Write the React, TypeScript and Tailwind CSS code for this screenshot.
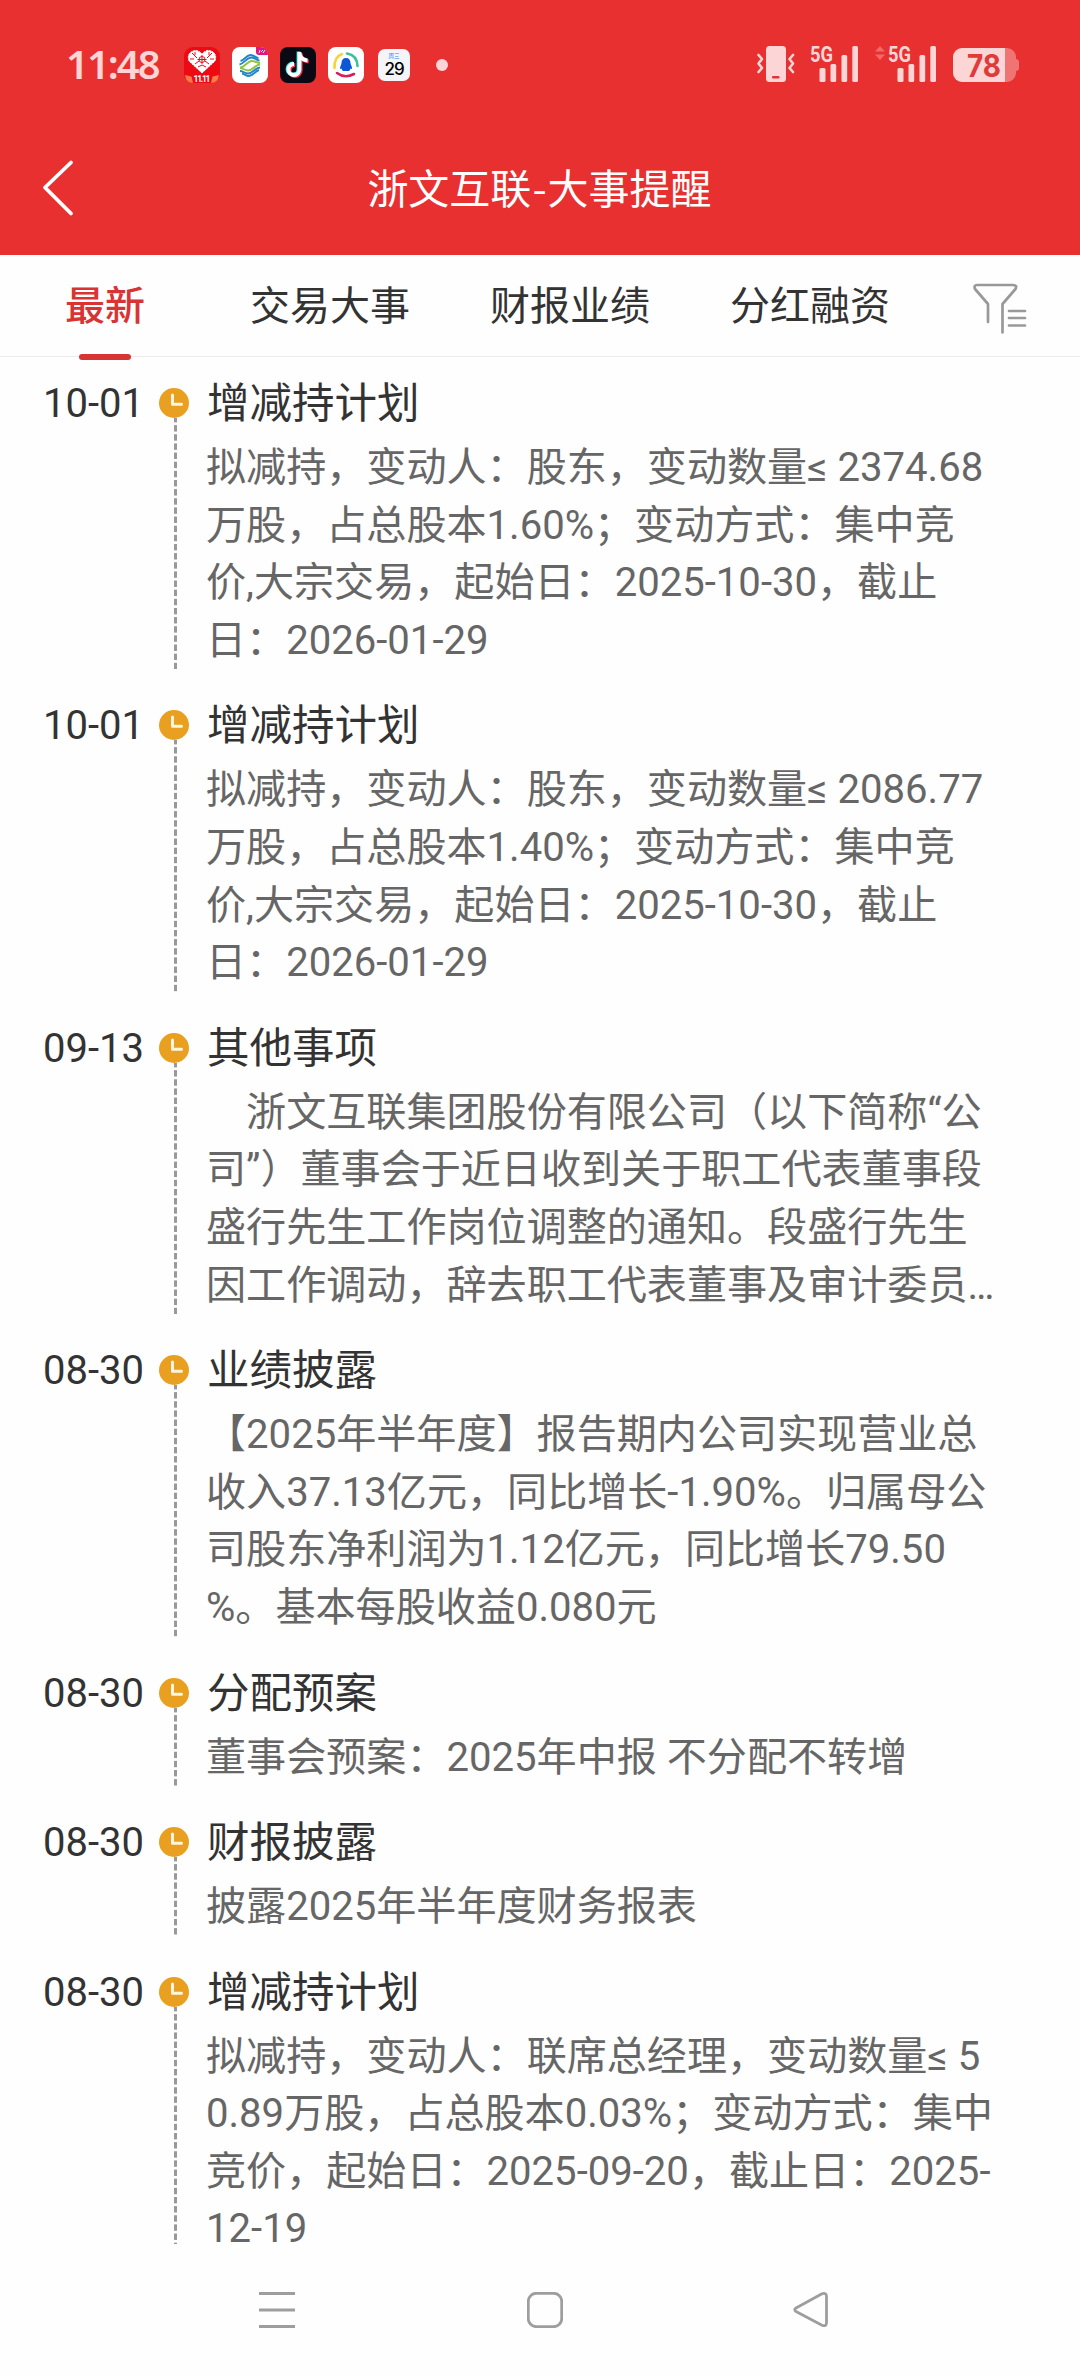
type EventItem = {
  id: number
  date: string
  title: string
  lines: string[]
}

const tabs = ['最新', '交易大事', '财报业绩', '分红融资']

const events: EventItem[] = [
  {
    id: 1,
    date: '10-01',
    title: '增减持计划',
    lines: [
      '拟减持，变动人：股东，变动数量≤ 2374.68',
      '万股，占总股本1.60%；变动方式：集中竞',
      '价,大宗交易，起始日：2025-10-30，截止',
      '日：2026-01-29',
    ],
  },
  {
    id: 2,
    date: '10-01',
    title: '增减持计划',
    lines: [
      '拟减持，变动人：股东，变动数量≤ 2086.77',
      '万股，占总股本1.40%；变动方式：集中竞',
      '价,大宗交易，起始日：2025-10-30，截止',
      '日：2026-01-29',
    ],
  },
  {
    id: 3,
    date: '09-13',
    title: '其他事项',
    lines: [
      '\u3000浙文互联集团股份有限公司（以下简称“公',
      '司”）董事会于近日收到关于职工代表董事段',
      '盛行先生工作岗位调整的通知。段盛行先生',
      '因工作调动，辞去职工代表董事及审计委员…',
    ],
  },
  {
    id: 4,
    date: '08-30',
    title: '业绩披露',
    lines: [
      '【2025年半年度】报告期内公司实现营业总',
      '收入37.13亿元，同比增长-1.90%。归属母公',
      '司股东净利润为1.12亿元，同比增长79.50',
      '%。基本每股收益0.080元',
    ],
  },
  {
    id: 5,
    date: '08-30',
    title: '分配预案',
    lines: ['董事会预案：2025年中报 不分配不转增'],
  },
  {
    id: 6,
    date: '08-30',
    title: '财报披露',
    lines: ['披露2025年半年度财务报表'],
  },
  {
    id: 7,
    date: '08-30',
    title: '增减持计划',
    lines: [
      '拟减持，变动人：联席总经理，变动数量≤ 5',
      '0.89万股，占总股本0.03%；变动方式：集中',
      '竞价，起始日：2025-09-20，截止日：2025-',
      '12-19',
    ],
  },
]

const ShoppingIcon = () => (
  <svg width="36" height="36" viewBox="0 0 36 36">
    <rect width="36" height="36" rx="9" fill="#ee0a14" />
    <path d="M1 28 Q18 33 35 28 Q34 36 27 36 H9 Q2 36 1 28Z" fill="#ff7a45" />
    <path d="M7 27 L18 25 L29 27 L27 36 H9Z" fill="#ee0a14" />
    <path
      d="M18 26 L5 14 Q3 8 7 5 Q13 1 18 7 Q23 1 29 5 Q33 8 31 14Z"
      fill="#fff"
      stroke="#fff"
      strokeDasharray="2 1"
    />
    <g fill="none" stroke="#ee0a14" strokeWidth="1">
      <circle cx="18" cy="12.500" r="3" />
      <path d="M18 8v9M13.500 12.500h9M8 6l5 5M28 6l-5 5M6 12h4M30 12h-4M11 17l4-3M25 17l-4-3M14 20l4-2 4 2M11 5v3M25 5v3" />
    </g>
    <text x="18" y="34.500" textAnchor="middle" fontSize="8.500" fontWeight="700" fill="#fff" fontFamily="Roboto, sans-serif" textLength="17">
      11.11
    </text>
  </svg>
)

const MobileIcon = () => (
  <svg width="36" height="36" viewBox="0 0 36 36">
    <rect width="36" height="36" rx="8" fill="#fff" />
    <path d="M24 0h4q8 0 8 8h-9q-3 0-3-3z" fill="#e0157f" />
    <path d="M27 6l1-3M29 5l2-2M31 6l2-3" stroke="#fff" strokeWidth=".9" />
    <g fill="none" strokeWidth="1.900">
      <path d="M8.500 14c4-1 6-6 10-6 4 0 5 3 8 3" stroke="#2386c8" />
      <path d="M7.500 17.500c5-1 7-7 12-7 4 0 5 3 8 3" stroke="#2386c8" />
      <path d="M8 20.500c5 0 7-6.500 12-6.500 3 0 5 2 8 2" stroke="#8dc63f" />
      <path d="M8 21c3 0 5 2.500 8 2.500 5 0 7-6 12-6" stroke="#8dc63f" />
      <path d="M8 24c3 0 5 2.500 8 2.500 5 0 7-6 12-6" stroke="#2386c8" />
      <path d="M10 26.500c2 0 4 2.500 7 2.500 4 0 6-5 10-6" stroke="#2386c8" />
    </g>
  </svg>
)

const MusicNoteIcon = () => {
  const note = 'M19.500 5v17.500a5.500 5.500 0 1 1-5.500-5.500M19.500 6c.5 4.500 3.500 7 8 7.500'
  return (
    <svg width="36" height="36" viewBox="0 0 36 36">
      <rect width="36" height="36" rx="8" fill="#0a0914" />
      <g fill="none" strokeWidth="3.800">
        <path d={note} stroke="#25f4ee" transform="translate(-1 -.5)" />
        <path d={note} stroke="#fe2c55" transform="translate(1.200 1)" />
        <path d={note} stroke="#fff" />
      </g>
    </svg>
  )
}

const PenguinIcon = () => (
  <svg width="36" height="36" viewBox="0 0 36 36">
    <rect width="36" height="36" rx="8" fill="#fff" />
    <g fill="none" strokeWidth="2.600" strokeLinecap="round">
      <path d="M6.500 21Q6 10 14 7" stroke="#f6d23c" />
      <path d="M19 6.500Q29 8 29.500 19" stroke="#3fbf9d" />
      <path d="M9 26Q17 32 26 27" stroke="#d81e5b" />
    </g>
    <path
      d="M18 11c-3 0-4.500 2-4.500 5 0 2-1.500 3-1.500 5 0 1 .6 1.300 1.500.5.400 1.500 1 2 1.500 2.500h6c.500-.500 1.100-1 1.500-2.500.900.800 1.500.500 1.500-.5 0-2-1.500-3-1.500-5 0-3-1.500-5-4.500-5z"
      fill="#0b57d8"
    />
  </svg>
)

const VibrateIcon = () => (
  <svg width="38" height="36" viewBox="0 0 38 36" fill="none">
    <rect x="9" width="20" height="36" rx="3.500" fill="#fcd6d6" />
    <rect x="15" y="30" width="7.500" height="2.500" rx="1.200" fill="#e83030" />
    <path
      d="M1.500 9l3.500 4-3.500 4.500 3.500 4.500-3.500 4M36 9l-3.500 4 3.500 4.500-3.500 4.500 3.500 4"
      stroke="#fcd6d6"
      strokeWidth="2.600"
      strokeLinecap="round"
      strokeLinejoin="round"
    />
  </svg>
)

const SignalIcon = ({ activity = false }: { activity?: boolean }) => (
  <svg className="overflow-visible" width="62" height="38" viewBox="0 0 62 38">
    {activity && <path d="M0 7.500L5 2l5 5.500zM0 10.500h10L5 16z" fill="#f06a6a" />}
    <text x="13" y="17.500" fontSize="21.500" fontWeight="700" textLength="23" lengthAdjust="spacingAndGlyphs" fill="#fcd6d6" fontFamily="Roboto, sans-serif">
      5G
    </text>
    <g fill="#fcd6d6">
      <rect x="22.500" y="24" width="6" height="14" rx="1.500" />
      <rect x="33.500" y="20" width="5.700" height="18" rx="1.500" />
      <rect x="44.500" y="11" width="5.700" height="27" rx="1.500" />
      <rect x="55.300" y="2" width="5.700" height="36" rx="1.500" />
    </g>
  </svg>
)

const BatteryIcon = () => (
  <svg className="overflow-visible" width="66" height="34" viewBox="0 0 66 34">
    <path d="M52 0h2a9 9 0 0 1 9 9v2q3 .5 3 3v6q0 2.500-3 3v2a9 9 0 0 1-9 9h-2z" fill="#f17474" />
    <path d="M9 0h43v34H9a9 9 0 0 1-9-9V9a9 9 0 0 1 9-9z" fill="#fcd6d6" />
    <text x="31" y="28.500" textAnchor="middle" fontSize="31" fontWeight="700" fill="#e03a3a" fontFamily="Inter, sans-serif" textLength="34" lengthAdjust="spacingAndGlyphs">
      78
    </text>
  </svg>
)

const FilterIcon = () => (
  <svg width="54" height="52" viewBox="0 0 54 52" fill="none" stroke="#999" strokeWidth="2.700" strokeLinecap="round" strokeLinejoin="round">
    <path d="M15 39V21L2 6Q.5 2 4 2H40Q44.500 2 42.500 6L29.500 21V49.500" />
    <path d="M36 28h16M36 35h16M36 42.500h16" />
  </svg>
)

const ClockIcon = () => (
  <svg className="block shrink-0" width="30" height="30" viewBox="0 0 30 30" fill="none">
    <circle cx="15" cy="15" r="15" fill="#e9a020" />
    <path d="M13.500 7V16.200H22.500" stroke="#fff6e0" strokeWidth="3" strokeLinecap="round" strokeLinejoin="round" />
  </svg>
)

const StatusBar = () => (
  <div className="flex h-[130px] items-center justify-between pl-[66px] pr-[61px]">
    <div className="flex items-center">
      <span className="w-[118px] pb-[3px] font-['Noto_Sans'] text-[40px] leading-[56px] font-semibold tracking-[-2px] text-[#fcd6d6]">11:48</span>
      <div className="flex items-center gap-3">
        <ShoppingIcon />
        <MobileIcon />
        <MusicNoteIcon />
        <PenguinIcon />
      </div>
      <div className="ml-3.5 flex h-8 w-8 flex-col items-center rounded-[7px] bg-[#f3f5f8] pt-[3px]">
        <span className="text-[5.500px] leading-[8px] text-[#2f80e8]">周三</span>
        <span className="font-[Inter] text-[17px] leading-[18px] font-medium tracking-[-1px] text-black">29</span>
      </div>
      <span className="ml-[26px] h-3 w-3 rounded-full bg-[#fcd6d6]" />
    </div>
    <div className="flex items-end pb-1">
      <VibrateIcon />
      <div className="ml-[2px]"><SignalIcon /></div>
      <div className="ml-4"><SignalIcon activity /></div>
      <div className="ml-4"><BatteryIcon /></div>
    </div>
  </div>
)

// the last row runs under the navigation bar, so its dashed line stops early
const EventRow = ({ event }: { event: EventItem }) => (
  <li className="flex pb-[25px] last:h-[283px] last:pb-0">
    <div className="w-[159px] pl-[43px] text-[40px] leading-[64px] text-[#333]">{event.date}</div>
    <div className="flex w-[47px] flex-col pt-4">
      <ClockIcon />
      <div className="ml-[15px] w-[3px] flex-1 bg-[linear-gradient(#999_6px,transparent_6px)] bg-[length:3px_9.150px] bg-[position:0_-2px]" />
    </div>
    <div>
      <h2 className="mb-[3px] ml-px text-[42.500px] leading-[64px] text-[#333]">{event.title}</h2>
      <div className="text-[40.080px] leading-[57.600px] whitespace-pre text-[#666]">
        {event.lines.map((line) => (
          <p key={line}>{line}</p>
        ))}
      </div>
    </div>
  </li>
)

export default function App() {
  return (
    <div className="flex h-[2376px] w-[1080px] flex-col overflow-hidden bg-[#fefefe] font-[Roboto,'Noto_Sans_CJK_SC',sans-serif]">
      <header className="h-[255px] shrink-0 bg-[#e83030]">
        <StatusBar />
        <div className="flex h-[116px] items-center">
          <svg className="ml-[42px]" width="34" height="58" viewBox="0 0 34 58" fill="none" stroke="#fff" strokeWidth="3.800" strokeLinecap="round" strokeLinejoin="round">
            <path d="M29 3.500L3 28.500L29 54.500" />
          </svg>
          <h1 className="flex-1 pr-[77px] pb-1 text-center font-['Noto_Sans_CJK_SC',sans-serif] text-[41px] leading-[60px] text-white">
            浙文互联<span className="mx-px">-</span>大事提醒
          </h1>
        </div>
      </header>

      <nav className="flex h-[102px] shrink-0 items-center border-b border-[#ebebeb] pl-[65px] text-[40px] text-[#333]">
        <button className="relative h-full w-20 pt-0.5 font-medium text-[#d93434]">
          {tabs[0]}
          <span className="absolute -bottom-1 left-[14px] h-1.5 w-[52px] rounded-full bg-[#d93434]" />
        </button>
        <div className="ml-[105px] flex gap-20 pt-0.5">
          {tabs.slice(1).map((tab) => (
            <button key={tab} className="w-40">{tab}</button>
          ))}
        </div>
        <button className="mt-1.5 ml-[83px]" aria-label="筛选">
          <FilterIcon />
        </button>
      </nav>

      <ul className="h-[1887px] shrink-0 pt-[15px]">
        {events.map((event) => (
          <EventRow key={event.id} event={event} />
        ))}
      </ul>

      <footer className="flex flex-1 items-start pt-12 pl-[259px]">
        <svg width="36" height="36" viewBox="0 0 36 36" stroke="#9e9e9e" strokeWidth="3">
          <path d="M0 1.500h36M0 18h36M0 34.500h36" />
        </svg>
        <svg className="ml-[232px]" width="36" height="36" viewBox="0 0 36 36" fill="none" stroke="#9e9e9e" strokeWidth="2.800">
          <rect x="1.300" y="1.300" width="33.400" height="33.400" rx="8" />
        </svg>
        <svg className="ml-[230px]" width="37" height="36" viewBox="0 0 37 36" fill="none" stroke="#9e9e9e" strokeWidth="2.800" strokeLinejoin="round">
          <path d="M3 16L29 1.800Q33.500.500 33.500 4.500V30.500Q33.500 35 29 33.200L3 19.500Q.500 17.800 3 16Z" />
        </svg>
      </footer>
    </div>
  )
}
